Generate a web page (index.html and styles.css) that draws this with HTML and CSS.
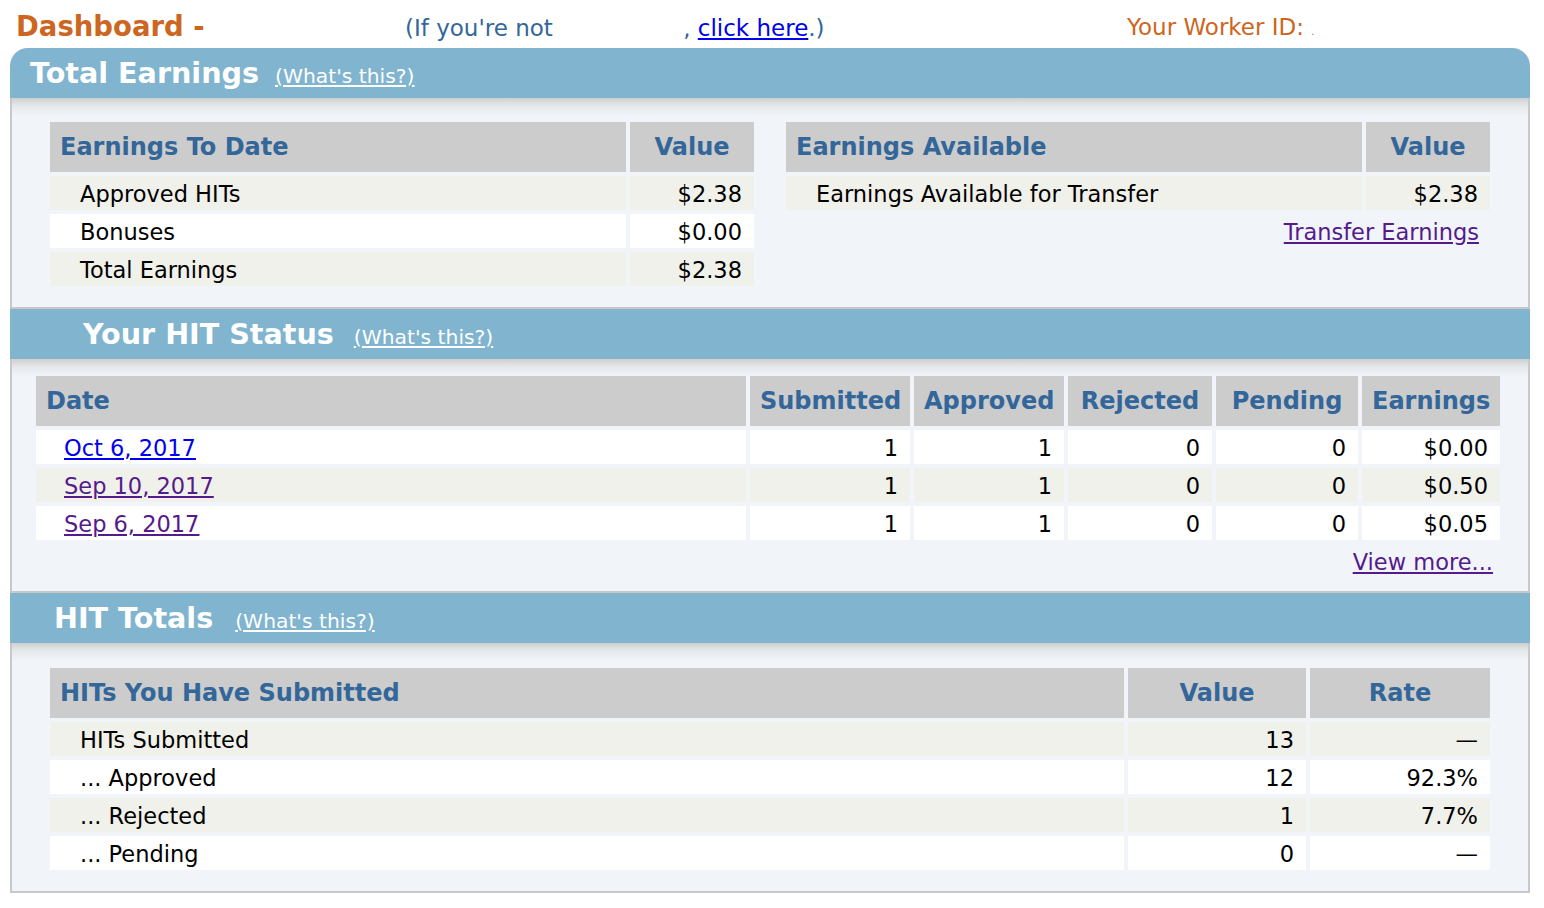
FILE: index.html
```html
<!DOCTYPE html>
<html>
<head>
<meta charset="utf-8">
<title>Dashboard</title>
<link rel="stylesheet" href="styles.css">
</head>
<body>
<div class="page">
  <div class="topbar">
    <div class="dash">Dashboard -</div>
    <div class="notice">(If you're not <span class="blank"></span>, <a class="link-new" href="#">click here</a>.)</div>
    <div class="worker">Your Worker ID: <span class="wid">.</span></div>
  </div>

  <div class="bar bar-first pad-1">
    <span class="bar-title">Total Earnings</span>
    <a class="whats tight" href="#">(What's this?)</a>
  </div>
  <div class="box box-earn">
    <table class="grid t-half">
      <colgroup><col class="w576"><col class="w124"></colgroup>
      <tr><th class="left">Earnings To Date</th><th>Value</th></tr>
      <tr class="odd"><td class="label">Approved HITs</td><td class="num">$2.38</td></tr>
      <tr class="even"><td class="label">Bonuses</td><td class="num">$0.00</td></tr>
      <tr class="odd"><td class="label">Total Earnings</td><td class="num">$2.38</td></tr>
    </table>
    <table class="grid t-half">
      <colgroup><col class="w576"><col class="w124"></colgroup>
      <tr><th class="left">Earnings Available</th><th>Value</th></tr>
      <tr class="odd"><td class="label">Earnings Available for Transfer</td><td class="num">$2.38</td></tr>
      <tr><td class="action" colspan="2"><a class="link-visited" href="#">Transfer Earnings</a></td></tr>
    </table>
  </div>

  <div class="bar pad-2">
    <span class="bar-title">Your HIT Status</span>
    <a class="whats" href="#">(What's this?)</a>
  </div>
  <div class="box box-status">
    <table class="grid t-status">
      <colgroup><col class="w710"><col class="w160"><col class="w150"><col class="w144"><col class="w142"><col class="w138"></colgroup>
      <tr><th class="left">Date</th><th>Submitted</th><th>Approved</th><th>Rejected</th><th>Pending</th><th>Earnings</th></tr>
      <tr class="even"><td class="date"><a class="link-new" href="#">Oct 6, 2017</a></td><td class="num">1</td><td class="num">1</td><td class="num">0</td><td class="num">0</td><td class="num">$0.00</td></tr>
      <tr class="odd"><td class="date"><a class="link-visited" href="#">Sep 10, 2017</a></td><td class="num">1</td><td class="num">1</td><td class="num">0</td><td class="num">0</td><td class="num">$0.50</td></tr>
      <tr class="even"><td class="date"><a class="link-visited" href="#">Sep 6, 2017</a></td><td class="num">1</td><td class="num">1</td><td class="num">0</td><td class="num">0</td><td class="num">$0.05</td></tr>
      <tr><td class="action more" colspan="6"><a class="link-visited" href="#">View more...</a></td></tr>
    </table>
  </div>

  <div class="bar pad-3">
    <span class="bar-title">HIT Totals</span>
    <a class="whats wide" href="#">(What's this?)</a>
  </div>
  <div class="box box-totals">
    <table class="grid t-totals">
      <colgroup><col class="w1074"><col class="w178"><col class="w180"></colgroup>
      <tr><th class="left">HITs You Have Submitted</th><th>Value</th><th>Rate</th></tr>
      <tr class="odd"><td class="label">HITs Submitted</td><td class="num">13</td><td class="num">—</td></tr>
      <tr class="even"><td class="label">... Approved</td><td class="num">12</td><td class="num">92.3%</td></tr>
      <tr class="odd"><td class="label">... Rejected</td><td class="num">1</td><td class="num">7.7%</td></tr>
      <tr class="even"><td class="label">... Pending</td><td class="num">0</td><td class="num">—</td></tr>
    </table>
  </div>
</div>
</body>
</html>
```

FILE: styles.css
```css
html, body {
  margin: 0;
  padding: 0;
  background: #ffffff;
}

body {
  font-family: "DejaVu Sans", Verdana, sans-serif;
  font-size: 22px;
  color: #000000;
}

.page {
  width: 1520px;
  margin-left: 10px;
}

/* ---------- top line ---------- */
.topbar {
  display: flex;
  align-items: baseline;
  height: 48px;
  box-sizing: border-box;
  padding-top: 10px;
  line-height: 32px;
}

.dash {
  width: 395px;
  padding-left: 6px;
  box-sizing: border-box;
  font-size: 27.5px;
  font-weight: bold;
  color: #cc6622;
}

.notice {
  width: 722px;
  font-size: 23px;
  color: #336699;
}

.blank {
  display: inline-block;
  width: 123px;
}

.worker {
  font-size: 23px;
  color: #cc6622;
  position: relative;
  top: -1px;
}

.wid {
  font-size: 10px;
}

a.link-new {
  color: #0000ee;
  text-decoration: underline;
}

a.link-visited {
  color: #551a8b;
  text-decoration: underline;
}

/* ---------- section bars ---------- */
.bar {
  display: flex;
  align-items: baseline;
  height: 50px;
  line-height: 50px;
  background: #80b4cf;
  color: #ffffff;
}

.bar-first {
  border-radius: 18px 18px 0 0;
}

.pad-1 { padding-left: 20px; }
.pad-2 { padding-left: 73px; }
.pad-3 { padding-left: 44px; }

.bar-title {
  font-size: 28.6px;
  font-weight: bold;
}

.whats {
  margin-left: 20px;
  font-size: 20.3px;
  color: #ffffff;
  text-decoration: underline;
}

.whats.tight { margin-left: 16px; }
.whats.wide { margin-left: 22px; }

/* ---------- boxes ---------- */
.box {
  border: 2px solid #c8c8c8;
  border-top: none;
  background: linear-gradient(#cfcfcf 0px, #e6e9ec 8px, #f1f5f9 18px, #f1f5f9 100%);
}

.box-earn {
  display: flex;
  align-items: flex-start;
  gap: 24px;
  padding: 20px 34px 17px 34px;
}

.box-status {
  padding: 13px 24px 9px 20px;
}

.box-totals {
  padding: 21px 34px 17px 34px;
}

/* ---------- tables ---------- */
.grid {
  border-collapse: separate;
  border-spacing: 4px;
  table-layout: fixed;
}

.t-half { width: 712px; }
.t-status { width: 1472px; }
.t-totals { width: 1448px; }

.w576 { width: 576px; }
.w124 { width: 124px; }
.w710 { width: 710px; }
.w160 { width: 160px; }
.w150 { width: 150px; }
.w144 { width: 144px; }
.w142 { width: 142px; }
.w138 { width: 138px; }
.w1074 { width: 1074px; }
.w178 { width: 178px; }
.w180 { width: 180px; }

.grid th {
  padding: 1px 10px 0 10px;
  line-height: 49px;
  background: #cccccc;
  color: #336699;
  font-size: 24px;
  font-weight: bold;
  text-align: center;
  white-space: nowrap;
  overflow: hidden;
}

.grid th.left {
  text-align: left;
}

.grid td {
  padding: 3px 12px 0 30px;
  line-height: 31px;
  font-size: 22.5px;
  white-space: nowrap;
  overflow: hidden;
}

.grid td.num {
  text-align: right;
  padding: 3px 12px 0 0;
}

.grid td.date {
  padding-left: 28px;
}

.grid td.action {
  text-align: right;
  padding: 3px 11px 0 0;
  background: transparent;
}

.grid td.more {
  padding-right: 7px;
}

tr.odd td {
  background: #f0f1ea;
}

tr.even td {
  background: #ffffff;
}
```
